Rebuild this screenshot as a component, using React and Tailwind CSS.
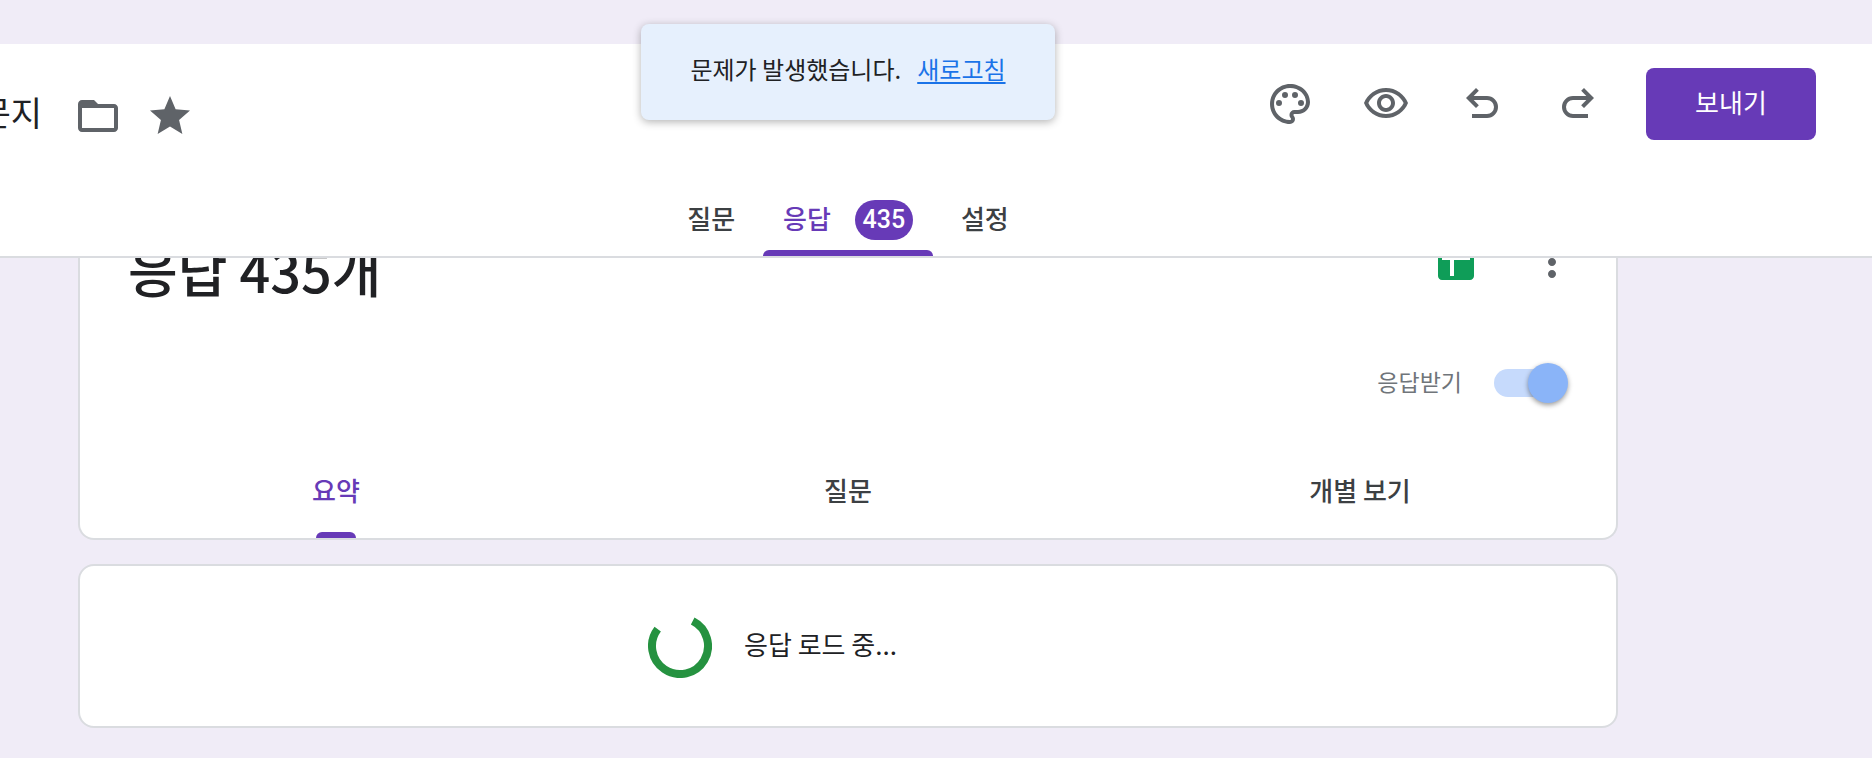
const ICONS = {
  folder:
    "M20 6h-8l-2-2H4c-1.1 0-1.99.9-1.99 2L2 18c0 1.1.9 2 2 2h16c1.1 0 2-.9 2-2V8c0-1.1-.9-2-2-2zm0 12H4V8h16v10z",
  star: "M12 17.27L18.18 21l-1.64-7.03L22 9.24l-7.19-.61L12 2 9.19 8.63 2 9.24l5.46 4.73L5.82 21z",
  palette:
    "M12 22C6.49 22 2 17.51 2 12S6.49 2 12 2s10 4.04 10 9c0 3.31-2.69 6-6 6h-1.77c-.28 0-.5.22-.5.5 0 .12.05.23.13.33.41.47.64 1.06.64 1.67A2.5 2.5 0 0 1 12 22zm0-18c-4.41 0-8 3.59-8 8s3.59 8 8 8c.28 0 .5-.22.5-.5a.54.54 0 0 0-.14-.35c-.41-.46-.63-1.05-.63-1.65a2.5 2.5 0 0 1 2.5-2.5H16c2.21 0 4-1.79 4-4 0-3.86-3.59-7-8-7z M5 11.5a1.5 1.5 0 1 0 3 0 1.5 1.5 0 1 0-3 0z M8 7.5a1.5 1.5 0 1 0 3 0 1.5 1.5 0 1 0-3 0z M13 7.5a1.5 1.5 0 1 0 3 0 1.5 1.5 0 1 0-3 0z M16 11.5a1.5 1.5 0 1 0 3 0 1.5 1.5 0 1 0-3 0z",
  eye: "M12 6c3.79 0 7.17 2.13 8.82 5.5C19.17 14.87 15.79 17 12 17s-7.17-2.13-8.82-5.5C4.83 8.13 8.21 6 12 6m0-2C7 4 2.73 7.11 1 11.5 2.73 15.89 7 19 12 19s9.27-3.11 11-7.5C21.27 7.11 17 4 12 4zm0 5c1.38 0 2.5 1.12 2.5 2.5S13.38 14 12 14s-2.5-1.12-2.5-2.5S10.62 9 12 9m0-2c-2.48 0-4.5 2.02-4.5 4.5S9.52 16 12 16s4.5-2.02 4.5-4.5S14.48 7 12 7z",
  undo: "M7 19v-2h7.5a3.5 3.5 0 0 0 0-7H7.83l2.59 2.59L9 14 4 9l5-5 1.41 1.41L7.83 8h6.67a5.5 5.5 0 0 1 0 11z",
  redo: "M17 19v-2H9.5a3.5 3.5 0 0 1 0-7h6.67l-2.59 2.59L15 14l5-5-5-5-1.41 1.41L16.17 8H9.5a5.5 5.5 0 0 0 0 11z",
  sheets:
    "M19 3H5c-1.1 0-2 .9-2 2v14c0 1.1.9 2 2 2h14c1.1 0 2-.9 2-2V5c0-1.1-.9-2-2-2zm0 8h-8v8H9v-8H5V9h4V5h2v4h8v2z",
  more: "M12 8c1.1 0 2-.9 2-2s-.9-2-2-2-2 .9-2 2 .9 2 2 2zm0 2c-1.1 0-2 .9-2 2s.9 2 2 2 2-.9 2-2-.9-2-2-2zm0 6c-1.1 0-2 .9-2 2s.9 2 2 2 2-.9 2-2-.9-2-2-2z",
};

function IconButton({ icon, label, className = "text-[#5f6368]" }) {
  return (
    <button type="button" aria-label={label} className={className}>
      <svg viewBox="0 0 24 24" className="block size-12" fill="currentColor" aria-hidden="true">
        <path d={ICONS[icon]} />
      </svg>
    </button>
  );
}

function Toast() {
  return (
    <div
      role="alert"
      className="absolute inset-x-0 top-6 z-20 flex justify-center pr-44"
    >
      <div className="flex h-24 min-w-[414px] items-center justify-center gap-4 rounded-lg bg-[#e6f0fd] px-6 pb-1.5 text-2xl whitespace-nowrap shadow-[0_2px_8px_rgba(0,0,0,0.3)]">
        <span>문제가 발생했습니다.</span>
        <a href="#reload" className="text-[#1a73e8] underline decoration-2 underline-offset-3">
          새로고침
        </a>
      </div>
    </div>
  );
}

function HeaderTab({ label, count, active }) {
  return (
    <button
      type="button"
      role="tab"
      aria-selected={Boolean(active)}
      className={
        active
          ? "relative flex h-full flex-col px-5 text-[#673ab7]"
          : "relative flex h-full flex-col px-5 text-[#3c4043]"
      }
    >
      <span className="flex h-10 items-center gap-6">
        <span className="pb-1.5">{label}</span>
        {count && (
          <span className="flex h-10 w-[58px] items-center justify-center rounded-full bg-[#673ab7] font-[Roboto,sans-serif] text-[25px] text-white">
            {count}
          </span>
        )}
      </span>
      {active && <span className="absolute inset-x-0 bottom-0 h-1.5 rounded-t-md bg-[#673ab7]" />}
    </button>
  );
}

function Header() {
  return (
    <header className="relative z-10 border-b-2 border-[#dadce0] bg-white">
      <div className="flex h-[156px] items-start justify-between pr-14">
        <div className="flex items-center pt-12">
          <h1 className="flex w-[42px] justify-end overflow-hidden pb-2 text-[34px] leading-10 whitespace-nowrap">
            설문지
          </h1>
          <div className="ml-8 flex gap-6">
            <IconButton icon="folder" label="폴더로 이동" />
            <IconButton icon="star" label="별표" />
          </div>
        </div>
        <div className="flex items-center gap-11 pt-6">
          <div className="flex gap-12">
            <IconButton icon="palette" label="테마 맞춤설정" />
            <IconButton icon="eye" label="미리보기" />
            <IconButton icon="undo" label="실행취소" />
            <IconButton icon="redo" label="재실행" />
          </div>
          <button
            type="button"
            className="h-[72px] w-[170px] rounded-lg bg-[#673ab7] pb-1 text-[26px] leading-9 text-white"
          >
            보내기
          </button>
        </div>
      </div>
      <div role="tablist" className="flex h-14 justify-center gap-2 pr-44 text-[26px] font-medium">
        <HeaderTab label="질문" />
        <HeaderTab label="응답" count="435" active />
        <HeaderTab label="설정" />
      </div>
    </header>
  );
}

function SummaryTab({ label, active }) {
  return (
    <button
      type="button"
      role="tab"
      aria-selected={Boolean(active)}
      className={
        active
          ? "relative flex-1 pb-3 text-[#673ab7]"
          : "relative flex-1 pb-3 text-[#3c4043]"
      }
    >
      {label}
      {active && (
        <span className="absolute bottom-0 left-1/2 h-1.5 w-10 -translate-x-1/2 rounded-t-md bg-[#673ab7]" />
      )}
    </button>
  );
}

function ResponsesCard() {
  return (
    <section className="rounded-b-2xl border-2 border-t-0 border-[#dadce0] bg-white">
      <div className="-mt-5 flex h-12 items-center justify-between pr-10 pl-12">
        <h2 className="pt-4 text-[54px] leading-[64px] font-medium">응답 435개</h2>
        <div className="flex gap-12">
          <IconButton icon="sheets" label="Sheets에서 보기" className="text-[#0f9d58]" />
          <IconButton icon="more" label="더보기" />
        </div>
      </div>
      <label className="mt-[77px] flex h-10 items-center justify-end gap-8 pr-[50px] text-[23px] text-[#70757a]">
        <span className="pb-1">응답받기</span>
        <input
          type="checkbox"
          role="switch"
          defaultChecked
          className="relative h-7 w-[72px] appearance-none rounded-full bg-[#c6dafc] before:absolute before:-top-1.5 before:-right-0.5 before:size-10 before:rounded-full before:bg-[#8ab4f8] before:shadow-[0_2px_5px_rgba(0,0,0,0.4)]"
        />
      </label>
      <div role="tablist" className="mt-[51px] flex h-[84px] text-[26px] leading-9 font-medium">
        <SummaryTab label="요약" active />
        <SummaryTab label="질문" />
        <SummaryTab label="개별 보기" />
      </div>
    </section>
  );
}

function LoadingCard() {
  return (
    <section className="flex h-[164px] items-center justify-center rounded-2xl border-2 border-[#dadce0] bg-white">
      <div role="status" className="flex w-[400px] items-center gap-8 text-[26px]">
        <svg viewBox="-32 -32 64 64" className="size-16" fill="none" aria-hidden="true">
          <path d="M12.7 -24.95A28 28 0 1 1 -22.3 -16.9" stroke="#259240" strokeWidth="8" />
        </svg>
        <span className="pb-1.5">응답 로드 중...</span>
      </div>
    </section>
  );
}

export default function App() {
  return (
    <div className="relative min-h-screen bg-[#f0ecf7] pt-11 font-['Noto_Sans_CJK_KR',sans-serif] text-[#202124]">
      <Toast />
      <Header />
      <main className="flex justify-center overflow-hidden pr-44 pb-8">
        <div className="flex w-full max-w-[1540px] flex-col gap-6">
          <ResponsesCard />
          <LoadingCard />
        </div>
      </main>
    </div>
  );
}
